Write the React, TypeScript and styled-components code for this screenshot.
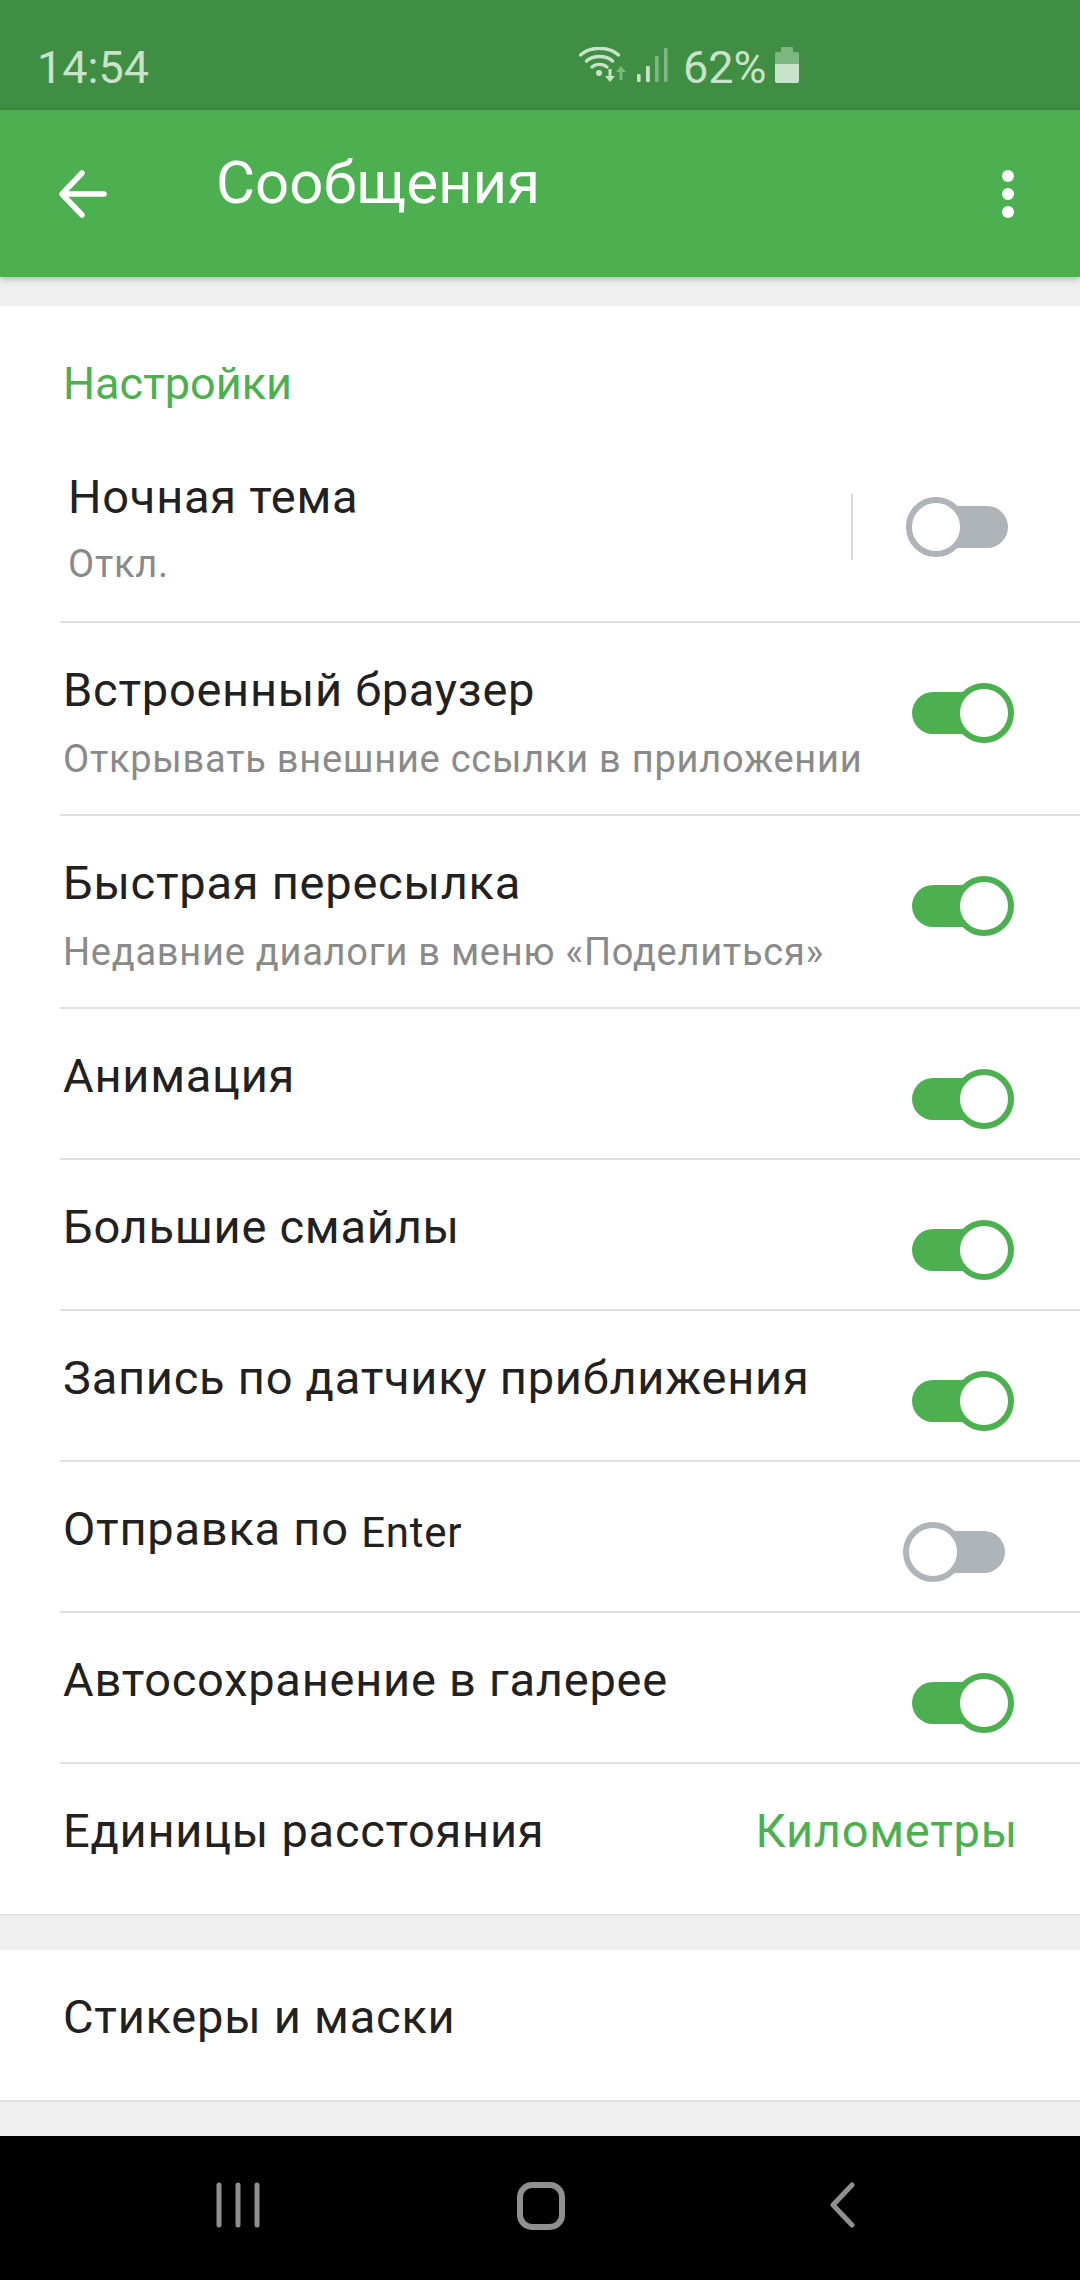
import React from "react"
import styled, { createGlobalStyle } from "styled-components"

const GlobalStyle = createGlobalStyle`
  html, body {
    margin: 0;
    padding: 0;
    background: #efefef;
  }
  * {
    box-sizing: border-box;
  }
`

const Page = styled.div`
  width: 1080px;
  height: 2280px;
  display: flex;
  flex-direction: column;
  background: #efefef;
  font-family: Roboto, "Liberation Sans", sans-serif;
  overflow: hidden;
`

const StatusBar = styled.div`
  height: 110px;
  flex: none;
  display: flex;
  align-items: center;
  padding: 24px 0 0 37px;
  background: #3f8e43;
  color: #c9e2ca;
  font-size: 45px;
`

const StatusTime = styled.span`
  width: 542px;
`

const StatusIcons = styled.div`
  display: flex;
  align-items: center;

  svg {
    margin-top: -4px;
  }
`

const StatusPercent = styled.span`
  margin: 0 8px 0 15px;
`

const SignalWrap = styled.div`
  margin-left: 10px;
  display: flex;
`

const Toolbar = styled.div`
  height: 167px;
  flex: none;
  display: flex;
  align-items: flex-start;
  background: #4caf50;
  color: #fff;
  box-shadow: 0 2px 6px rgba(0, 0, 0, 0.25);
  position: relative;
`

const BackButton = styled.div`
  width: 216px;
  flex: none;
  padding: 60px 0 0 59px;
  display: flex;
`

const Title = styled.div`
  flex: 1;
  padding-top: 38px;
  font-size: 60px;
  line-height: 70px;
`

const MenuButton = styled.div`
  width: 78px;
  flex: none;
  padding-top: 60px;
  display: flex;
`

const Card = styled.div`
  background: #fff;
  box-shadow: 0 1px 2px rgba(0, 0, 0, 0.1);
`

const SettingsCard = styled(Card)`
  margin-top: 29px;
`

const StickersCard = styled(Card)`
  margin-top: 36px;
`

const SectionHeader = styled.div`
  height: 124px;
  padding: 53px 0 0 63px;
  color: #4caf50;
  font-size: 45px;
  line-height: 50px;
`

const Row = styled.div<{ $height: number; $last?: boolean }>`
  height: ${p => p.$height}px;
  margin-left: 60px;
  display: flex;
  align-items: flex-start;
  border-bottom: ${p => (p.$last ? "none" : "2px solid #e0e0e0")};
`

const RowText = styled.div<{ $inset?: number }>`
  flex: 1;
  padding: 38px 0 0 ${p => p.$inset ?? 3}px;
`

const RowTitle = styled.div`
  font-size: 47px;
  line-height: 58px;
  color: #212121;
  letter-spacing: 0.75px;
`

const EnterWord = styled.span`
  font-size: 42px;
  vertical-align: -2px;
`

const RowSubtitle = styled.div<{ $gap?: number }>`
  margin-top: ${p => p.$gap ?? 18}px;
  font-size: 38px;
  line-height: 44px;
  color: #8a8a8a;
  letter-spacing: 0.75px;
`

const RowValue = styled.div`
  padding: 38px 62px 0 0;
  font-size: 47px;
  line-height: 58px;
  color: #4caf50;
  letter-spacing: 0.75px;
`

const VerticalRule = styled.div`
  width: 2px;
  height: 66px;
  margin: 64px 59px 0 0;
  background: #d8d8d8;
`

const ToggleTrack = styled.div<{ $on: boolean; $right: number; $top: number }>`
  flex: none;
  position: relative;
  width: 96px;
  height: 42px;
  margin: ${p => p.$top}px ${p => p.$right}px 0 0;
  border-radius: 21px;
  background: ${p => (p.$on ? "#4caf50" : "#afb4b8")};
`

const ToggleKnob = styled.div<{ $on: boolean }>`
  position: absolute;
  top: -9px;
  ${p => (p.$on ? "right: -6px;" : "left: -6px;")}
  width: 60px;
  height: 60px;
  border-radius: 50%;
  background: #fff;
  border: 6px solid ${p => (p.$on ? "#4caf50" : "#afb4b8")};
`

const NavBar = styled.div`
  margin-top: 36px;
  flex: 1;
  background: #000;
  display: flex;
  align-items: flex-start;
  padding-top: 46px;
`

const NavSlot = styled.div<{ $width: number }>`
  width: ${p => p.$width}px;
  flex: none;
  display: flex;
  justify-content: flex-end;
`

type ToggleProps = { on?: boolean; right?: number; top?: number }

const Toggle = ({ on = true, right = 72, top = 69 }: ToggleProps) => (
  <ToggleTrack $on={on} $right={right} $top={top}>
    <ToggleKnob $on={on} />
  </ToggleTrack>
)

const WifiIcon = () => (
  <svg width="48" height="36" viewBox="0 0 48 36" fill="none">
    <g stroke="#c9e2ca" strokeWidth="3.4" strokeLinecap="round">
      <path d="M1.5 8 C 12 -1, 29 -1, 39.5 8" />
      <path d="M7.5 14 C 14 8, 27 8, 33.5 14" />
      <path d="M13 20 C 17 16.5, 24 16.5, 28 20" />
    </g>
    <circle cx="20" cy="26" r="3" fill="#c9e2ca" />
    <path d="M31 22 V30" stroke="#c9e2ca" strokeWidth="3" />
    <path d="M26 29 H36 L31 35 Z" fill="#c9e2ca" />
    <path d="M42 33 V24" stroke="#7db880" strokeWidth="3" />
    <path d="M37 25 H47 L42 19 Z" fill="#7db880" />
  </svg>
)

const SignalIcon = () => (
  <svg width="31" height="36" viewBox="0 0 31 36">
    <rect x="0" y="27" width="3.6" height="8" rx="1" fill="#c9e2ca" />
    <rect x="9" y="19" width="3.8" height="16" rx="1" fill="#c9e2ca" />
    <rect x="18" y="9" width="3.6" height="26" rx="1" fill="#7db880" />
    <rect x="27" y="1" width="3.6" height="34" rx="1" fill="#7db880" />
  </svg>
)

const BatteryIcon = () => (
  <svg width="24" height="36" viewBox="0 0 24 36">
    <path d="M6 1 a1 1 0 0 1 1 -1 h10 a1 1 0 0 1 1 1 v4 h4 a2 2 0 0 1 2 2 v10 h-24 v-10 a2 2 0 0 1 2 -2 h4 z" fill="#7db880" />
    <path d="M0 17 h24 v17 a2 2 0 0 1 -2 2 h-20 a2 2 0 0 1 -2 -2 z" fill="#c9e2ca" />
  </svg>
)

const App = () => (
  <Page>
    <GlobalStyle />
    <StatusBar>
      <StatusTime>14:54</StatusTime>
      <StatusIcons>
        <WifiIcon />
        <SignalWrap>
          <SignalIcon />
        </SignalWrap>
        <StatusPercent>62%</StatusPercent>
        <BatteryIcon />
      </StatusIcons>
    </StatusBar>
    <Toolbar>
      <BackButton>
        <svg width="48" height="48" viewBox="0 0 48 48" fill="none" stroke="#fff" strokeWidth="5.5" strokeLinecap="round" strokeLinejoin="round">
          <path d="M3 24 H45 M23 3 L3 24 L23 45" />
        </svg>
      </BackButton>
      <Title>Сообщения</Title>
      <MenuButton>
        <svg width="12" height="48" viewBox="0 0 12 48" fill="#fff">
          <circle cx="6" cy="6" r="6" />
          <circle cx="6" cy="24" r="6" />
          <circle cx="6" cy="42" r="6" />
        </svg>
      </MenuButton>
    </Toolbar>
    <SettingsCard>
      <SectionHeader>Настройки</SectionHeader>
      <Row $height={193}>
        <RowText $inset={8}>
          <RowTitle>Ночная тема</RowTitle>
          <RowSubtitle $gap={16}>Откл.</RowSubtitle>
        </RowText>
        <VerticalRule />
        <Toggle on={false} top={76} />
      </Row>
      <Row $height={193}>
        <RowText>
          <RowTitle>Встроенный браузер</RowTitle>
          <RowSubtitle>Открывать внешние ссылки в приложении</RowSubtitle>
        </RowText>
        <Toggle />
      </Row>
      <Row $height={193}>
        <RowText>
          <RowTitle>Быстрая пересылка</RowTitle>
          <RowSubtitle>Недавние диалоги в меню «Поделиться»</RowSubtitle>
        </RowText>
        <Toggle />
      </Row>
      <Row $height={151}>
        <RowText>
          <RowTitle>Анимация</RowTitle>
        </RowText>
        <Toggle />
      </Row>
      <Row $height={151}>
        <RowText>
          <RowTitle>Большие смайлы</RowTitle>
        </RowText>
        <Toggle />
      </Row>
      <Row $height={151}>
        <RowText>
          <RowTitle>Запись по датчику приближения</RowTitle>
        </RowText>
        <Toggle />
      </Row>
      <Row $height={151}>
        <RowText>
          <RowTitle>
            Отправка по <EnterWord>Enter</EnterWord>
          </RowTitle>
        </RowText>
        <Toggle on={false} right={75} />
      </Row>
      <Row $height={151}>
        <RowText>
          <RowTitle>Автосохранение в галерее</RowTitle>
        </RowText>
        <Toggle />
      </Row>
      <Row $height={150} $last>
        <RowText>
          <RowTitle>Единицы расстояния</RowTitle>
        </RowText>
        <RowValue>Километры</RowValue>
      </Row>
    </SettingsCard>
    <StickersCard>
      <Row $height={150} $last>
        <RowText>
          <RowTitle>Стикеры и маски</RowTitle>
        </RowText>
      </Row>
    </StickersCard>
    <NavBar>
      <NavSlot $width={260}>
        <svg width="44" height="46" viewBox="0 0 44 46" fill="none" stroke="#8f8f8f" strokeWidth="5" strokeLinecap="round">
          <path d="M3 3 V43 M22 3 V43 M41 3 V43" />
        </svg>
      </NavSlot>
      <NavSlot $width={305}>
        <svg width="48" height="48" viewBox="0 0 48 48" fill="none" stroke="#8f8f8f" strokeWidth="6">
          <rect x="3" y="3" width="42" height="42" rx="12" />
        </svg>
      </NavSlot>
      <NavSlot $width={290}>
        <svg width="26" height="46" viewBox="0 0 26 46" fill="none" stroke="#8f8f8f" strokeWidth="5" strokeLinecap="round" strokeLinejoin="round">
          <path d="M23 3 L4 23 L23 43" />
        </svg>
      </NavSlot>
    </NavBar>
  </Page>
)

export default App
